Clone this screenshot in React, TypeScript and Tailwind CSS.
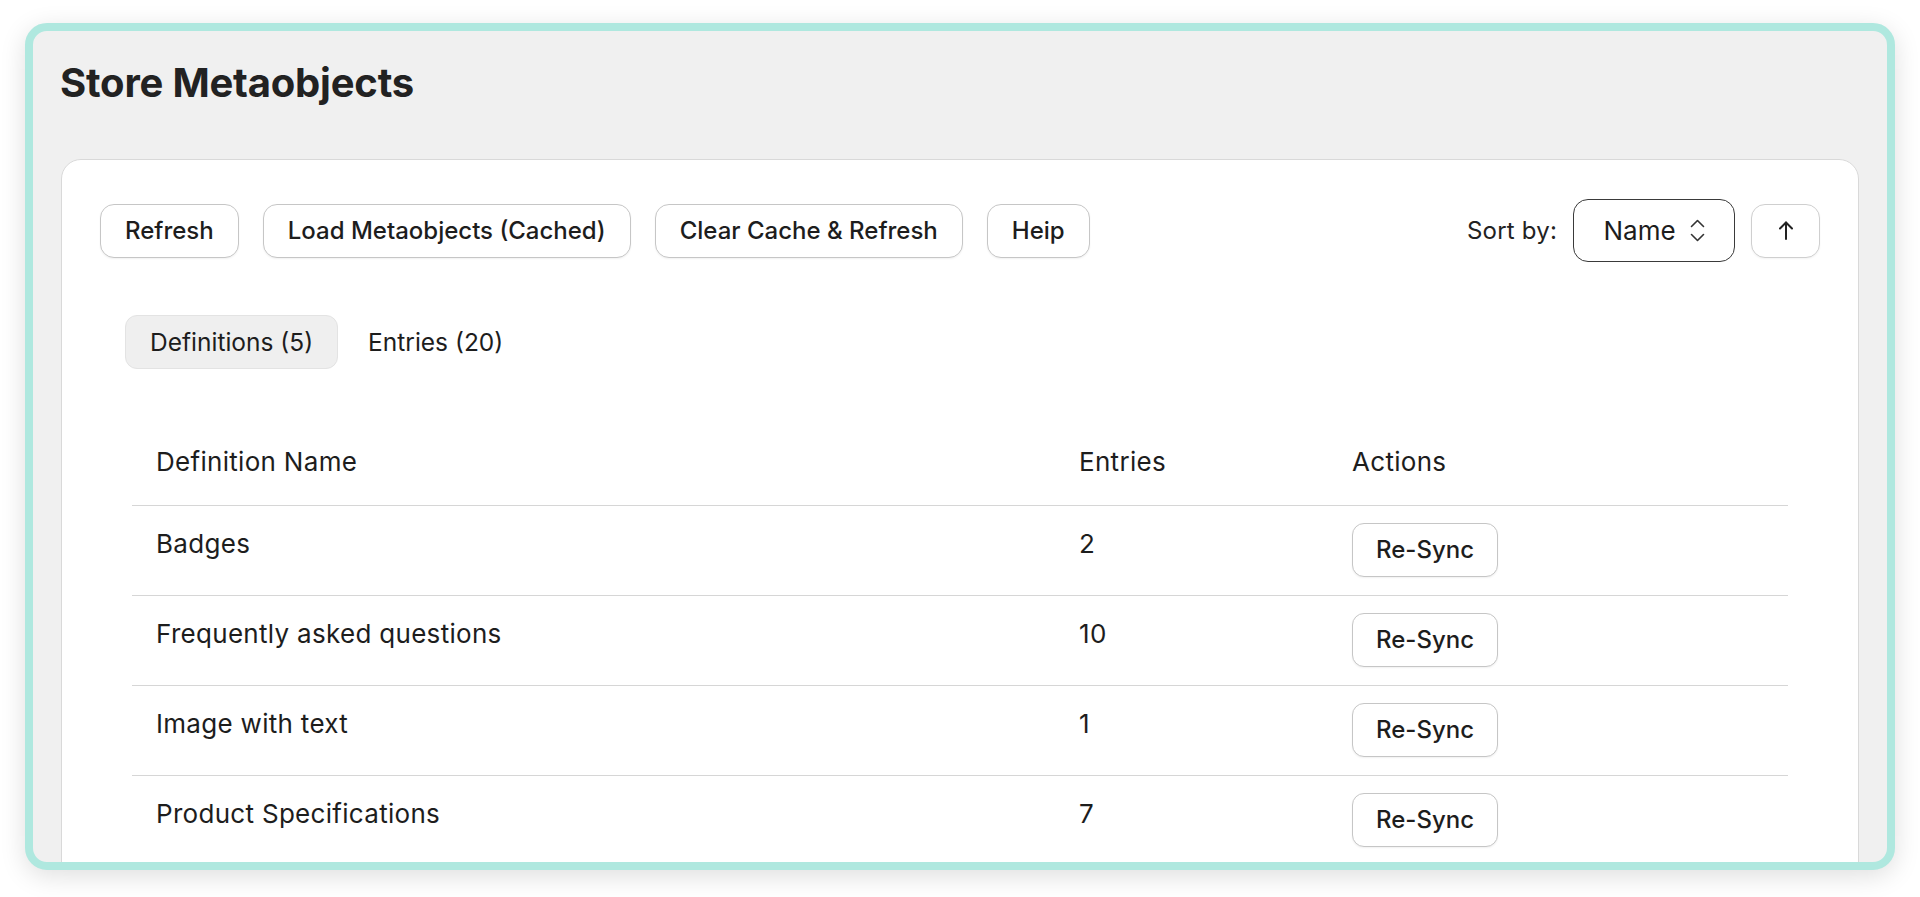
type Definition = {
  name: string;
  entries: number;
};

const definitions: Definition[] = [
  { name: "Badges", entries: 2 },
  { name: "Frequently asked questions", entries: 10 },
  { name: "Image with text", entries: 1 },
  { name: "Product Specifications", entries: 7 },
];

const toolbarActions = ["Refresh", "Load Metaobjects (Cached)", "Clear Cache & Refresh", "Heip"];

function OutlineButton({ label }: { label: string }) {
  return (
    <button className="h-[54px] px-6 rounded-[14px] border border-[#c6c6c6] bg-white text-[24px] font-medium text-[#1d1d1d] shadow-[0_1px_2px_rgba(0,0,0,0.06)] whitespace-nowrap">
      {label}
    </button>
  );
}

// up/down carets used by the sort select
function SortCarets() {
  return (
    <svg width="15" height="23" viewBox="0 0 15 23" fill="none" stroke="#333" strokeWidth="1.6" strokeLinecap="round" strokeLinejoin="round">
      <path d="M1.5 7.5 7.5 1.5 13.5 7.5" />
      <path d="M1.5 15.5 7.5 21.5 13.5 15.5" />
    </svg>
  );
}

function UpArrow() {
  return (
    <svg width="14" height="19" viewBox="0 0 14 19" fill="none" stroke="#222" strokeWidth="2" strokeLinecap="round" strokeLinejoin="round">
      <path d="M7 18V1.5" />
      <path d="M1 7.5 7 1.5 13 7.5" />
    </svg>
  );
}

export default function App() {
  return (
    <div
      className="w-full h-[897px] bg-white pl-[25px] pt-[23px] overflow-hidden"
      style={{ fontFamily: "Inter, 'Noto Sans', sans-serif" }}
    >
      <div className="w-[1870px] h-[847px] rounded-[22px] border-8 border-[#afe8df] bg-[#f0f0f0] shadow-[0_6px_26px_rgba(0,0,0,0.13)] overflow-hidden flex flex-col">
        <h1 className="pl-[27px] pt-[28px] text-[40px] leading-[48px] font-bold text-[#222] tracking-[-0.2px]">
          Store Metaobjects
        </h1>

        {/* Main card */}
        <div className="mx-[28px] mt-[52px] flex-1 rounded-t-[20px] border border-[#d9d9d9] bg-white px-[38px] pt-[39px]">
          {/* Toolbar */}
          <div className="flex items-center justify-between">
            <div className="flex items-center gap-6">
              {toolbarActions.map((label) => (
                <OutlineButton key={label} label={label} />
              ))}
            </div>
            <div className="flex items-center gap-4">
              <span className="text-[24px] text-[#222] tracking-[0.2px]">Sort by:</span>
              <button className="h-[63px] w-[162px] flex items-center justify-center gap-[14px] rounded-[15px] border-[1.5px] border-[#3a3a3a] bg-white text-[26px] text-[#1d1d1d]">
                Name
                <SortCarets />
              </button>
              <button className="h-[54px] w-[69px] flex items-center justify-center rounded-[14px] border border-[#cfcfcf] bg-white shadow-[0_1px_2px_rgba(0,0,0,0.05)]">
                <UpArrow />
              </button>
            </div>
          </div>

          {/* Tabs */}
          <div className="mt-[53px] ml-[25px] flex items-center gap-[6px]">
            <button className="h-[54px] px-6 rounded-[12px] border border-[#e3e3e3] bg-[#efefef] text-[24.5px] text-[#1d1d1d]">
              Definitions (5)
            </button>
            <button className="h-[54px] px-6 rounded-[12px] text-[24.5px] text-[#1d1d1d]">Entries (20)</button>
          </div>

          {/* Definitions table */}
          <div className="mt-[49px] mx-[32px] text-[26px] tracking-[0.3px] text-[#1d1d1d]">
            <div className="grid grid-cols-[923px_273px_1fr] h-[88px] items-center border-b border-[#d6d6d6]">
              <div className="pl-6">Definition Name</div>
              <div className="pl-6">Entries</div>
              <div className="pl-6">Actions</div>
            </div>
            {definitions.map((d) => (
              <div
                key={d.name}
                className="grid grid-cols-[923px_273px_1fr] items-start pt-[17px] pb-[18px] border-b border-[#d6d6d6]"
              >
                <div className="pl-6 pt-[3px] leading-9">{d.name}</div>
                <div className="pl-6 pt-[3px] leading-9">{d.entries}</div>
                <div className="pl-6">
                  <button className="h-[54px] px-[23px] rounded-[12px] border border-[#c6c6c6] bg-white text-[24px] font-medium tracking-normal text-[#1d1d1d] shadow-[0_1px_2px_rgba(0,0,0,0.06)]">
                    Re-Sync
                  </button>
                </div>
              </div>
            ))}
          </div>
        </div>
      </div>
    </div>
  );
}
